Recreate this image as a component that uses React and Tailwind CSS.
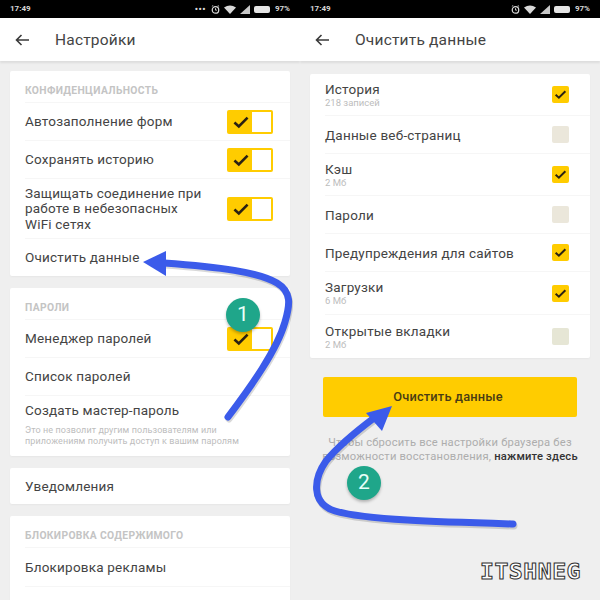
import React from "react";

const font = "font-['Roboto',sans-serif]";

const Check = ({ className }) => (
  <svg viewBox="0 0 20 16" className={className} fill="none">
    <path d="M2.5 8.5 L7.5 13 L17.5 3" stroke="#2a2113" strokeWidth="3" />
  </svg>
);

const Toggle = () => (
  <div className="flex h-6 w-[46px] shrink-0 rounded-[2px] bg-[#ffcc00] p-[2px]">
    <div className="flex w-[24px] items-center justify-center">
      <Check className="h-[14px] w-[18px]" />
    </div>
    <div className="w-[19px] bg-white" />
  </div>
);

const Box = ({ on, muted }) =>
  on ? (
    <div className="flex h-[17px] w-[17px] items-center justify-center rounded-[2px] bg-[#ffcc00]">
      <Check className="h-[11px] w-[13px]" />
    </div>
  ) : (
    <div className={`h-[17px] w-[17px] rounded-[2px] ${muted ? "bg-[#e6e6d5]" : "bg-[#ebe7db]"}`} />
  );

const StatusBar = ({ dots }) => (
  <div className="flex h-[18px] shrink-0 items-center justify-between bg-black pl-[10px] pr-[10px] text-[8px] font-bold text-[#d8d8d8]">
    <span>17:49</span>
    <div className="flex items-center gap-[4px]">
      {dots && <span className="mr-[1px] text-[9px] leading-none tracking-[0.5px]">•••</span>}
      <svg viewBox="0 0 10 10" className="h-[9px] w-[9px]" fill="none" stroke="#d8d8d8" strokeWidth="1.4">
        <circle cx="5" cy="5.5" r="3.6" />
        <path d="M5 3.5V5.7H6.6M1 1.5L2.5 .5M9 1.5L7.5 .5" strokeWidth="1" />
      </svg>
      <svg viewBox="0 0 12 9" className="h-[9px] w-[12px]" fill="#d8d8d8">
        <path d="M0 2.5 Q6 -1.5 12 2.5 L6 9Z" />
      </svg>
      <svg viewBox="0 0 10 9" className="h-[9px] w-[10px]" fill="#c8c8c8">
        <path d="M0 9 L10 0 V9Z" />
      </svg>
      <div className="h-[7px] w-[16px] rounded-[2px] bg-[#e4e4e4]" />
      <span className="ml-[1px]">97%</span>
    </div>
  </div>
);

const Header = ({ title }) => (
  <div className="flex h-[43px] shrink-0 items-center bg-white pl-[15px] shadow-[0_2px_2px_rgba(0,0,0,0.08)]">
    <svg viewBox="0 0 14 12" className="h-[12px] w-[14px]" fill="none" stroke="#3a3a3a" strokeWidth="1.6">
      <path d="M14 6H1.5M6.5 1L1.5 6L6.5 11" />
    </svg>
    <span className="ml-[26px] pt-[3px] text-[15.5px] tracking-[0.2px] text-[#444]">{title}</span>
  </div>
);

const Section = ({ children }) => (
  <div className="flex h-8 items-center border-b border-[#f6f6f6] pt-2 text-[10.3px] font-bold tracking-[0.35px] text-[#c4c4c4]">
    {children}
  </div>
);

const Row = ({ h, children, toggle, last }) => (
  <div className={`flex items-center justify-between pr-[17px] text-[13.5px] leading-[15.5px] tracking-[0.2px] text-[#444] ${h} ${last ? "" : "border-b border-[#f6f6f6]"}`}>
    <div className="pt-[1px]">{children}</div>
    {toggle && <Toggle />}
  </div>
);

const Card = ({ className = "", children }) => (
  <div className={`shrink-0 rounded-[2px] bg-white pl-[15px] shadow-[0_1px_2px_rgba(0,0,0,0.04)] ${className}`}>{children}</div>
);

const clearRows = [
  { title: "История", sub: "218 записей", on: true, h: "h-[42px]" },
  { title: "Данные веб-страниц", on: false, h: "h-[38px]" },
  { title: "Кэш", sub: "2 Мб", on: true, h: "h-[42px]" },
  { title: "Пароли", on: false, h: "h-[38px]" },
  { title: "Предупреждения для сайтов", on: true, h: "h-[38px]" },
  { title: "Загрузки", sub: "6 Мб", on: true, h: "h-[43px]" },
  { title: "Открытые вкладки", sub: "2 Мб", on: false, muted: true, h: "h-[43px]" },
];

function SettingsScreen() {
  return (
    <div className="flex h-[600px] w-[300px] flex-col overflow-hidden bg-[#efefef]">
      <StatusBar dots />
      <Header title="Настройки" />
      <div className="flex shrink-0 flex-col gap-3 px-[10px] pt-[10px]">
        <Card>
          <Section>КОНФИДЕНЦИАЛЬНОСТЬ</Section>
          <Row h="h-[38px]" toggle>Автозаполнение форм</Row>
          <Row h="h-[38px]" toggle>Сохранять историю</Row>
          <Row h="h-[60px]" toggle>
            Защищать соединение при
            <br />
            работе в небезопасных
            <br />
            WiFi сетях
          </Row>
          <Row h="h-[37px]" last>Очистить данные</Row>
        </Card>
        <Card>
          <Section>ПАРОЛИ</Section>
          <Row h="h-[38px]" toggle>Менеджер паролей</Row>
          <Row h="h-[38px]">Список паролей</Row>
          <div className="h-[60px] pt-[6px]">
            <div className="text-[13.5px] leading-[16px] tracking-[0.2px] text-[#444]">Создать мастер-пароль</div>
            <div className="mt-[7px] text-[9px] leading-[11px] tracking-[0.1px] text-[#bdbdbd]">
              Это не позволит другим пользователям или
              <br />
              приложениям получить доступ к вашим паролям
            </div>
          </div>
        </Card>
        <Card>
          <Row h="h-9" last>Уведомления</Row>
        </Card>
        <Card>
          <Section>БЛОКИРОВКА СОДЕРЖИМОГО</Section>
          <Row h="h-[39px]">Блокировка рекламы</Row>
          <Row h="h-[37px]" last>Дополнения для блокировки</Row>
        </Card>
      </div>
    </div>
  );
}

function ClearScreen() {
  return (
    <div className="flex h-[600px] w-[300px] flex-col overflow-hidden bg-[#efefef]">
      <StatusBar />
      <Header title="Очистить данные" />
      <div className="flex shrink-0 flex-col px-[10px] pt-[13px]">
        <Card>
          {clearRows.map((r, i) => (
            <div
              key={r.title}
              className={`flex items-center justify-between pr-[21px] ${r.h} ${i < clearRows.length - 1 ? "border-b border-[#f6f6f6]" : ""}`}
            >
              <div>
                <div className="text-[13.5px] leading-[16px] tracking-[0.2px] text-[#444]">{r.title}</div>
                {r.sub && <div className="text-[9.5px] leading-[12px] text-[#bdbdbd]">{r.sub}</div>}
              </div>
              <Box on={r.on} muted={r.muted} />
            </div>
          ))}
        </Card>
        <div className="mx-[13px] mt-[19px] flex h-10 items-center justify-center rounded-[2px] bg-[#ffcc00] pr-1 text-[12.8px] font-medium tracking-[0.2px] text-[#4a3c14]">
          Очистить данные
        </div>
        <div className="mt-[19px] text-center text-[11.2px] leading-[14px] tracking-[0.2px] text-[#adadad]">
          Чтобы сбросить все настройки браузера без
          <br />
          возможности восстановления, <span className="font-medium text-[#333]">нажмите здесь</span>
        </div>
      </div>
    </div>
  );
}

function Badge({ className, children }) {
  return (
    <div className={`absolute flex h-[34px] w-[34px] items-center justify-center rounded-full bg-[#1fa68a] text-[21px] text-[#e8fff8] shadow-[0_2px_3px_rgba(0,0,0,0.25)] ${className}`}>
      {children}
    </div>
  );
}

const arrow1 = "M228 417 C252 385 277 350 285 322 C290 305 292 292 277 283 C258 272 220 267 164 263";
const arrow2 = "M513 524 C440 522 365 520 335 511 C310 503 314 478 326 461 C340 444 358 430 374 418";

export default function App() {
  return (
    <div className={`relative flex h-[600px] w-[600px] overflow-hidden ${font}`}>
      <SettingsScreen />
      <ClearScreen />

      {/* hand drawn arrows on top of the screenshots */}
      <svg viewBox="0 0 600 600" className="absolute left-0 top-0 h-[600px] w-[600px]" fill="none">
        <g stroke="#000" strokeOpacity="0.15" transform="translate(1 2)" strokeWidth="7" strokeLinecap="round">
          <path d={arrow1} />
          <path d={arrow2} />
        </g>
        <path d={arrow1} stroke="#3b5bea" strokeWidth="7" strokeLinecap="round" />
        <path d="M143 262 L166 251 L166 276 Z" fill="#3b5bea" />
        <path d={arrow2} stroke="#3b5bea" strokeWidth="7" strokeLinecap="round" />
        <path d="M392 406 L366 413 L382 431 Z" fill="#3b5bea" />
      </svg>
      <Badge className="left-[226px] top-[298px]">1</Badge>
      <Badge className="left-[347px] top-[466px]">2</Badge>

      <div className="absolute left-[480px] top-[561px] origin-top-left scale-x-[1.05] font-['DejaVu_Sans_Mono',monospace] text-[22px] font-bold leading-none tracking-[0.5px] text-white [-webkit-text-stroke:1px_#333]">
        ITSHNEG
      </div>
    </div>
  );
}
